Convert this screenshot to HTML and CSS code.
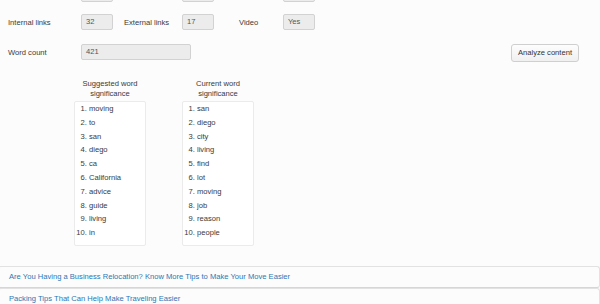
FILE: index.html
```html
<!DOCTYPE html>
<html lang="en">
<head>
    <meta charset="UTF-8">
    <title>Content analysis</title>
    <link rel="stylesheet" href="styles.css">
</head>
<body>

<div class="analysis">
    <div class="field-row cut-row">
        <span class="label"></span>
        <span class="value short"></span>
        <span class="label mid"></span>
        <span class="value short"></span>
        <span class="label last"></span>
        <span class="value short"></span>
    </div>

    <div class="field-row">
        <span class="label">Internal links</span>
        <span class="value short">32</span>
        <span class="label mid">External links</span>
        <span class="value short">17</span>
        <span class="label last">Video</span>
        <span class="value short">Yes</span>
    </div>

    <div class="field-row">
        <span class="label">Word count</span>
        <span class="value long">421</span>
        <button class="analyze-btn">Analyze content</button>
    </div>

    <div class="word-lists">
        <div class="word-col">
            <div class="word-title">Suggested word<br>significance</div>
            <ol class="word-box">
                <li>moving</li>
                <li>to</li>
                <li>san</li>
                <li>diego</li>
                <li>ca</li>
                <li>California</li>
                <li>advice</li>
                <li>guide</li>
                <li>living</li>
                <li>in</li>
            </ol>
        </div>
        <div class="word-col">
            <div class="word-title">Current word<br>significance</div>
            <ol class="word-box">
                <li>san</li>
                <li>diego</li>
                <li>city</li>
                <li>living</li>
                <li>find</li>
                <li>lot</li>
                <li>moving</li>
                <li>job</li>
                <li>reason</li>
                <li>people</li>
            </ol>
        </div>
    </div>
</div>

<ul class="related">
    <li><a href="#">Are You Having a Business Relocation? Know More Tips to Make Your Move Easier</a></li>
    <li><a href="#">Packing Tips That Can Help Make Traveling Easier</a></li>
</ul>

</body>
</html>
```

FILE: styles.css
```css
body, html {
    font-family: 'Liberation Sans', Arial, sans-serif;
    font-size: 7.6px;
    color: #3a3a3a;
    margin: 0;
    padding: 0;
    background: #fcfcfc;
    overflow: hidden;
}

.analysis {
    padding: 0 20px 0 8px;
}

.field-row {
    display: flex;
    align-items: center;
    height: 16px;
    margin-top: 14px;
}

.cut-row {
    margin-top: -14px;
}

.field-row:nth-child(2) {
    margin-top: 12px;
}

.label {
    width: 73px;
}

.label.mid {
    width: 58px;
    margin-left: 11px;
}

.label.last {
    width: 44px;
    margin-left: 25px;
}

.value {
    box-sizing: border-box;
    height: 16px;
    line-height: 14px;
    padding-left: 4px;
    background: #ececec;
    border: 1px solid #d2d2d2;
    border-radius: 2px;
    color: #555;
}

.value.short {
    width: 32px;
}

.value.long {
    width: 110px;
}

.analyze-btn {
    margin-left: auto;
    margin-right: 1px;
    margin-top: 1px;
    height: 18px;
    padding: 0 6px;
    font-family: inherit;
    font-size: 7.6px;
    color: #333;
    background: linear-gradient(#fdfdfd, #f0f0f0);
    border: 1px solid #cfcfcf;
    border-radius: 3px;
}

.word-lists {
    display: flex;
    gap: 36px;
    margin-left: 66px;
    margin-top: 19px;
}

.word-col {
    width: 72px;
}

.word-title {
    text-align: center;
    line-height: 10px;
    margin-bottom: 2px;
}

.word-box {
    box-sizing: border-box;
    height: 145px;
    margin: 0;
    padding: 0 0 0 14px;
    background: #fff;
    border: 1px solid #ebebeb;
    border-radius: 2px;
}

.word-box li {
    line-height: 13.8px;
}

.related {
    list-style: none;
    margin: 20px 0 0 -2px;
    padding: 0;
}

.related li {
    padding: 4px 10px;
    line-height: 12px;
    border: 1px solid #e2e2e2;
    border-bottom-color: #d6d6d6;
    border-radius: 3px;
    background: #fcfcfc;
}

.related a {
    color: #2b77b5;
    text-decoration: none;
}
```
